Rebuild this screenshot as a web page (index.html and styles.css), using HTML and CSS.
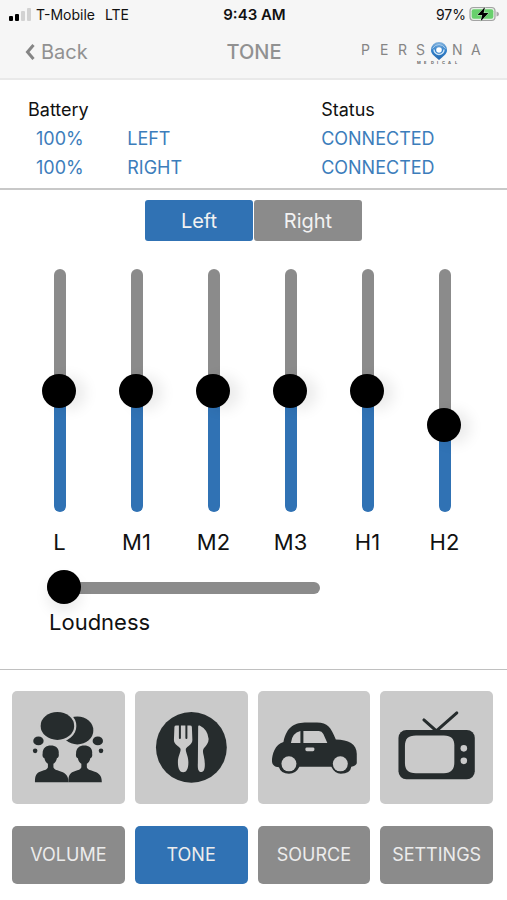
FILE: index.html
```html
<!DOCTYPE html>
<html lang="en">
<head>
<meta charset="utf-8">
<meta name="viewport" content="width=device-width, initial-scale=1">
<title>Tone</title>
<link rel="stylesheet" href="styles.css">
</head>
<body>
<header class="top">
  <div class="status-bar">
    <div class="carrier">
      <svg class="signal" viewBox="0 0 22 13" aria-hidden="true">
        <rect x="0" y="8" width="4" height="5" rx="1"/>
        <rect x="6" y="6" width="4" height="7" rx="1"/>
        <rect class="dim" x="12" y="3" width="4" height="10" rx="1"/>
        <rect class="dim" x="18" y="0" width="4" height="13" rx="1"/>
      </svg>
      <span>T-Mobile</span>
      <span class="network">LTE</span>
    </div>
    <div class="time">9:43 AM</div>
    <div class="power">
      <span>97%</span>
      <svg class="battery" viewBox="0 0 31 16" aria-hidden="true">
        <rect x="1" y="1.500" width="25" height="13" rx="3.500" fill="#e4efe4" stroke="#a3a3a3" stroke-width="1.200"/>
        <rect x="2.700" y="3.200" width="21.600" height="9.600" rx="2" fill="#68d06c"/>
        <path d="M27.500 5.500Q30 6 30 8T27.500 10.500Z" fill="#a8a8a8"/>
        <path d="M16 1 8.500 9h4.700l-1.500 6.200L19.500 7H14.600Z" fill="#000" stroke="#d9f0da" stroke-width=".8" paint-order="stroke"/>
      </svg>
    </div>
  </div>
  <nav class="nav-bar">
    <a class="back" href="#">
      <svg class="chevron" viewBox="0 0 10 16" aria-hidden="true"><path d="M8.500 1 2.500 8l6 7"/></svg>Back
    </a>
    <h1 class="title">TONE</h1>
    <svg class="logo" viewBox="0 0 122 26" role="img" aria-label="Persona Medical">
      <defs>
        <linearGradient id="orb" x1="0" y1="0" x2="0" y2="1">
          <stop offset="0" stop-color="#86b4dd"/>
          <stop offset=".5" stop-color="#2f7fca"/>
          <stop offset="1" stop-color="#2a6cb0"/>
        </linearGradient>
      </defs>
      <text class="brand" x="0 19 37 55" y="16">PERS</text>
      <text class="brand" x="91 110" y="16">NA</text>
      <path d="M78 3a8 8 0 0 1 8 8c0 4-3 5.500-5 7.500L78 21l-3-2.500c-2-2-5-3.500-5-7.500a8 8 0 0 1 8-8Z" fill="url(#orb)"/>
      <path d="M71.500 9.500Q74 5.500 78 5.500T84.500 9.500" fill="none" stroke="#a9cdec" stroke-width="1"/>
      <path d="M73 10.500a5 5 0 1 0 10 0" fill="none" stroke="#cfe5f7" stroke-width="1.400"/>
      <circle cx="78" cy="11" r="2.800" fill="#fff"/>
      <text class="brand-sub" x="56 63 70 76 81 87 94" y="25">MEDICAL</text>
    </svg>
  </nav>
</header>

<main>
  <section class="devices">
    <table>
      <colgroup><col class="value-col"><col class="side-col"><col></colgroup>
      <thead>
        <tr><th colspan="2" scope="col">Battery</th><th scope="col">Status</th></tr>
      </thead>
      <tbody>
        <tr><td class="value">100%</td><td>LEFT</td><td>CONNECTED</td></tr>
        <tr><td class="value">100%</td><td>RIGHT</td><td>CONNECTED</td></tr>
      </tbody>
    </table>
  </section>

  <section class="tone">
    <div class="sides">
      <button class="side-button active" type="button">Left</button>
      <button class="side-button" type="button">Right</button>
    </div>
    <div class="bands">
      <div class="band"><input class="fader" id="l" type="range" min="0" max="6" value="3"><label for="l">L</label></div>
      <div class="band"><input class="fader" id="m1" type="range" min="0" max="6" value="3"><label for="m1">M1</label></div>
      <div class="band"><input class="fader" id="m2" type="range" min="0" max="6" value="3"><label for="m2">M2</label></div>
      <div class="band"><input class="fader" id="m3" type="range" min="0" max="6" value="3"><label for="m3">M3</label></div>
      <div class="band"><input class="fader" id="h1" type="range" min="0" max="6" value="3"><label for="h1">H1</label></div>
      <div class="band"><input class="fader low" id="h2" type="range" min="0" max="6" value="2"><label for="h2">H2</label></div>
    </div>
    <div class="loudness">
      <input class="slider" id="loudness" type="range" min="0" max="10" value="0">
      <label for="loudness">Loudness</label>
    </div>
  </section>
</main>

<footer class="bottom">
  <div class="tiles">
    <button class="tile" type="button" aria-label="Conversation">
      <svg viewBox="0 0 113 113" aria-hidden="true">
        <ellipse cx="65.500" cy="39.500" rx="16" ry="14"/>
        <ellipse class="cutout" cx="45.500" cy="35" rx="18" ry="15.200" stroke-width="2"/>
        <ellipse cx="45.500" cy="35" rx="16.800" ry="14"/>
        <ellipse cx="26.500" cy="50" rx="5.200" ry="4.400"/>
        <circle cx="23.200" cy="60" r="2.300"/>
        <ellipse cx="86" cy="50" rx="5.200" ry="4.400"/>
        <circle cx="89.200" cy="60" r="2.300"/>
        <path id="person" d="M23 91.500c0-7 1.500-9 5-10.500 3.500-1.400 7.500-2 8-4.500V73c-2-1.300-3-3-3.500-5.500-1.800-.5-2.200-3-1.800-4.500C30.500 57.500 34 54.700 39 54.700s8.500 2.800 7.800 8.300c.4 1.500 0 4-1.800 4.500-.5 2.500-1.500 4.200-3.500 5.500v3.500c.5 2.500 4.500 3.100 8 4.500 4 1.500 7 3.500 7 10.500Z"/>
        <use href="#person" x="33.500"/>
      </svg>
    </button>
    <button class="tile" type="button" aria-label="Restaurant">
      <svg viewBox="0 0 113 113" aria-hidden="true">
        <circle cx="56.500" cy="56.500" r="35.500"/>
        <path class="light" d="M39.500 36q0-1.500 2-1.500h13.500q2 0 2 1.500l.5 13c0 5-5.500 6-6.500 9-.6 3 2.500 7 2.500 13.500 0 7-2 10-5.200 10S43 78.500 43 71.500C43 65 46.200 61 45.600 58c-1-3-6.600-4-6.600-9Z"/>
        <path class="tines" d="M45 34V47M51.500 34V47"/>
        <path class="light" d="M63.300 35.500q0-1.500 1.500-.8 8 4 9 13.300c0 4-2.300 6.500-4.800 9.500-1.500 2.500-.8 4 0 8 1.500 7 1.700 15.700-2.300 15.700-3.500 0-4-3.500-3.700-9Z"/>
      </svg>
    </button>
    <button class="tile" type="button" aria-label="Car">
      <svg viewBox="0 0 113 113" aria-hidden="true">
        <path d="M14 70c0-6 3-17 11.500-19C29 35 37 31.500 49 31.500h10c11 0 14 5 19 17C91 49 99.500 53 99 64v8.500q-1 3-5.500 3.500-1 7-10.500 7Q77 83 73.500 76H41.500Q38 83 31 83q-8 0-10-6.500c-5-.5-7-3-7-6.500Z"/>
        <circle class="light" cx="31" cy="73" r="7.500"/>
        <circle class="light" cx="82.500" cy="73" r="7.500"/>
        <path class="light" d="M33 52q1-10 9.500-12V52ZM45.500 52V40H61q3 0 4.500 3l4 9Z"/>
        <rect class="light" x="47.500" y="56.500" width="9" height="4" rx="1.500"/>
      </svg>
    </button>
    <button class="tile" type="button" aria-label="Television">
      <svg viewBox="0 0 113 113" aria-hidden="true">
        <path class="stroke" d="M44 29 56.500 40 77 22"/>
        <rect x="18.500" y="39" width="76.500" height="49.500" rx="8"/>
        <path class="light" d="M36 44.500h28c7.500 0 10.500 3.500 10.500 10v17c0 7-3 11-10.500 11H36C28 82.500 25 79 25 72V55c0-7 3-10.500 11-10.500Z"/>
        <circle class="light" cx="84" cy="57.500" r="3.300"/>
        <circle class="light" cx="84" cy="70" r="3.300"/>
      </svg>
    </button>
  </div>
  <nav class="tabs">
    <button class="tab" type="button">VOLUME</button>
    <button class="tab active" type="button">TONE</button>
    <button class="tab" type="button">SOURCE</button>
    <button class="tab" type="button">SETTINGS</button>
  </nav>
</footer>
</body>
</html>
```
FILE: styles.css
```css
:root {
  --blue: #3072b4;
  --gray: #8b8b8b;
  --tile: #cacaca;
  --ink: #262c2d;
}

* {
  box-sizing: border-box;
}

body {
  margin: 0;
  background: #fff;
  color: #111;
  font-family: Inter, "Liberation Sans", sans-serif;
  font-size: 18px;
}

button,
input {
  margin: 0;
  border: 0;
  padding: 0;
  font: inherit;
}

.top {
  background: #f6f6f6;
  border-bottom: 2px solid #e9e9e9;
}

.status-bar {
  display: grid;
  grid-template-columns: 1fr auto 1fr;
  align-items: center;
  height: 28px;
  padding: 0 7px 0 9px;
  font-size: 14px;
}

.carrier,
.power {
  display: flex;
  align-items: center;
}

.carrier {
  gap: 5px;
}

.network {
  margin-left: 5px;
}

.power {
  justify-content: flex-end;
  gap: 3px;
}

.signal {
  width: 22px;
  height: 13px;
}

.dim {
  fill: #d2d2d2;
}

.battery {
  width: 31px;
  height: 16px;
}

.time {
  font-weight: 600;
  font-size: 15px;
}

.nav-bar {
  display: grid;
  grid-template-columns: 1fr auto 1fr;
  align-items: center;
  height: 50px;
  padding: 0 24px 2px 25px;
  color: #919191;
}

.back {
  display: flex;
  align-items: center;
  gap: 6px;
  color: inherit;
  font-size: 20px;
  text-decoration: none;
}

.chevron {
  width: 10px;
  height: 16px;
  fill: none;
  stroke: #858585;
  stroke-width: 3;
}

.title {
  margin: 0;
  font-size: 20px;
  font-weight: 500;
}

.logo {
  justify-self: end;
  width: 122px;
  height: 26px;
}

.brand {
  fill: #858585;
  font-size: 14px;
}

.brand-sub {
  fill: #666;
  font-size: 4px;
  font-weight: 700;
}

.devices {
  padding: 15px 28px 6px;
  border-bottom: 2px solid #c8c8c8;
}

.devices table {
  width: 100%;
  border-collapse: collapse;
  table-layout: fixed;
}

.value-col {
  width: 22%;
}

.side-col {
  width: 43%;
}

.devices th,
.devices td {
  height: 29px;
  padding: 0;
  font-weight: 400;
  text-align: left;
}

.devices td {
  color: #3c7dbb;
}

.devices .value {
  padding-left: 8px;
}

.tone {
  padding: 10px 0 33px;
}

.sides {
  display: flex;
  justify-content: center;
  gap: 1px;
}

.side-button {
  width: 108px;
  height: 41px;
  border-radius: 3px;
  background: var(--gray);
  color: #f2f2f2;
  font-size: 20px;
}

.active {
  background: var(--blue);
}

.bands {
  display: grid;
  grid-template-columns: repeat(6, 1fr);
  padding: 28px 24px 0 21px;
}

.band {
  display: flex;
  flex-direction: column;
  align-items: center;
  gap: 16px;
  font-size: 22px;
  line-height: 28px;
}

.fader,
.slider {
  appearance: none;
  border-radius: 6px;
}

.fader {
  width: 12px;
  height: 243px;
  writing-mode: vertical-lr;
  direction: rtl;
  background: linear-gradient(to top, var(--blue) 50%, var(--gray) 50%);
}

.fader.low {
  background: linear-gradient(to top, var(--blue) 35%, var(--gray) 35%);
}

.fader::-webkit-slider-thumb,
.slider::-webkit-slider-thumb {
  appearance: none;
  width: 34px;
  height: 34px;
  border-radius: 50%;
  background: #000;
}

.fader::-webkit-slider-thumb {
  margin-left: -2px;
  box-shadow: 10px 2px 14px rgb(0 0 0 / 8%);
}

.slider::-webkit-slider-thumb {
  margin-top: -2px;
  box-shadow: 0 8px 14px rgb(0 0 0 / 8%);
}

.loudness {
  display: flex;
  flex-direction: column;
  gap: 14px;
  padding: 26px 47px 0;
  font-size: 22px;
  line-height: 28px;
}

.slider {
  width: 66%;
  height: 12px;
  background: var(--gray);
}

.loudness label {
  padding-left: 2px;
}

.bottom {
  padding: 21px 14px 16px 12px;
  border-top: 1px solid #c0c0c0;
}

.tiles,
.tabs {
  display: grid;
  grid-template-columns: repeat(4, 1fr);
  gap: 10px;
}

.tabs {
  margin-top: 22px;
}

.tile {
  aspect-ratio: 1;
  border-radius: 5px;
  background: var(--tile);
}

.tile svg {
  display: block;
  width: 100%;
  fill: var(--ink);
}

.tile .light {
  fill: var(--tile);
}

.tile .cutout {
  fill: var(--tile);
  stroke: var(--tile);
}

.tile .stroke {
  fill: none;
  stroke: var(--ink);
  stroke-width: 3;
  stroke-linecap: round;
}

.tile .tines {
  fill: none;
  stroke: var(--ink);
  stroke-width: 2;
  stroke-linecap: round;
}

.tab {
  height: 58px;
  border-radius: 5px;
  background: var(--gray);
  color: #ececec;
}

.tab.active {
  background: var(--blue);
}
```
